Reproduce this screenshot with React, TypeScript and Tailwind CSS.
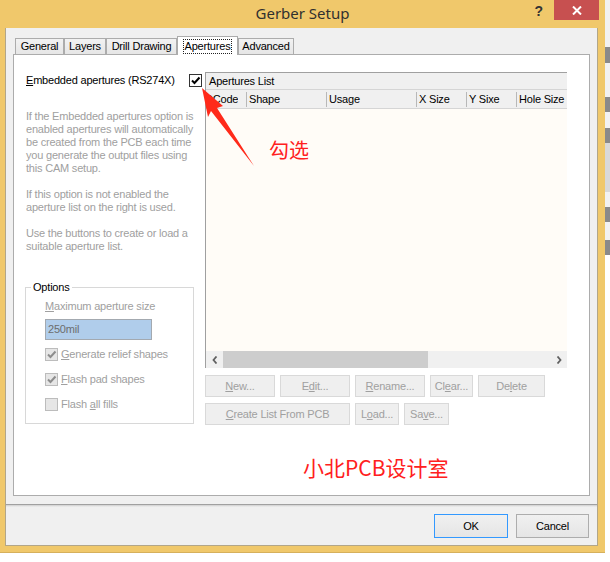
import React from 'react';

const desc = [
  ['If the Embedded apertures option is', 'enabled apertures will automatically', 'be created from the PCB each time', 'you generate the output files using', 'this CAM setup.'],
  ['If this option is not enabled the', 'aperture list on the right is used.'],
  ['Use the buttons to create or load a', 'suitable aperture list.'],
];

const tabs = [
  { label: 'General', w: 'w-[49px]' },
  { label: 'Layers', w: 'w-[42px]' },
  { label: 'Drill Drawing', w: 'w-[71px]' },
  { label: 'Apertures', w: 'w-[61px]', active: true },
  { label: 'Advanced', w: 'w-[56px]' },
];

const CheckMark = ({ color }: { color: string }) => (
  <svg width="11" height="11" viewBox="0 0 11 11">
    <path d="M2 5.5 L4.5 8 L9.5 2.5" fill="none" stroke={color} strokeWidth="2" />
  </svg>
);

const CheckBox = ({ checked, disabled }: { checked?: boolean; disabled?: boolean }) => (
  <div
    className={`w-[13px] h-[13px] shrink-0 flex items-center justify-center border ${
      disabled ? 'border-[#bcbcbc] bg-[#e6e6e6]' : 'border-[#333333] bg-white'
    }`}
  >
    {checked && <CheckMark color={disabled ? '#8d8d8d' : '#000000'} />}
  </div>
);

const OptionRow = ({ checked, children }: { checked?: boolean; children: React.ReactNode }) => (
  <div className="h-[13px] flex items-center">
    <CheckBox checked={checked} disabled />
    <span className="ml-[3px] text-[#a0a0a0]">{children}</span>
  </div>
);

const DisabledButton = ({ w, children }: { w: string; children: React.ReactNode }) => (
  <div className={`${w} h-[22px] border border-[#d9d9d9] bg-[#efefef] text-[#a0a0a0] flex items-center justify-center`}>
    {children}
  </div>
);

const Chevron = ({ dir }: { dir: 'left' | 'right' }) => (
  <svg width="6" height="8" viewBox="0 0 6 8">
    <path
      d={dir === 'left' ? 'M4.5 0.5 L1.5 4 L4.5 7.5' : 'M1.5 0.5 L4.5 4 L1.5 7.5'}
      fill="none"
      stroke="#606060"
      strokeWidth="1.8"
    />
  </svg>
);

const columns = [
  { label: 'Shape', w: 'w-[80px]' },
  { label: 'Usage', w: 'w-[90px]' },
  { label: 'X Size', w: 'w-[50px]' },
  { label: 'Y Sixe', w: 'w-[50px]' },
];

export default function App() {
  return (
    <div className="relative flex w-[610px] h-[562px] bg-white overflow-hidden font-['Liberation_Sans',Arial,sans-serif] text-[11px] tracking-[-0.2px] text-black">
      {/* window */}
      <div className="flex flex-col w-[605px] h-[553px] bg-[#f0c86b] border-b border-[#d6b05c]">
        {/* title bar */}
        <div className="grid grid-cols-[1fr_auto_1fr] h-[28px] shrink-0">
          <div />
          <div className="pt-[3px] font-['Noto_Sans',sans-serif] text-[15px] leading-[20px] tracking-normal text-[#303030]">
            Gerber Setup
          </div>
          <div className="flex justify-end items-start pr-[6px]">
            <span className="mt-[3px] mr-[11px] font-bold text-[14px] leading-[16px] tracking-normal text-[#333333]">?</span>
            <div className="w-[45px] h-[20px] bg-[#c75050] flex items-center justify-center">
              <svg width="10" height="9" viewBox="0 0 10 9">
                <path d="M1 0.5 L9 8.5 M9 0.5 L1 8.5" stroke="#ffffff" strokeWidth="2" />
              </svg>
            </div>
          </div>
        </div>

        {/* client area */}
        <div className="flex-1 flex flex-col ml-[5px] mr-[7px] mb-[6px] border-x border-b border-[#b2a689] bg-[#f0f0f0]">
          <div className="pt-[10px] px-[7px]">
            <div className="flex items-end h-[16px] pl-[2px]">
              {tabs.map(t =>
                t.active ? (
                  <div
                    key={t.label}
                    className={`${t.w} relative z-10 h-[19px] -mb-[1px] border-t border-x border-[#acacac] bg-white flex items-start justify-center pt-[2px]`}
                  >
                    <span className="border border-dotted border-[#222222] px-[1px] leading-[13px]">{t.label}</span>
                  </div>
                ) : (
                  <div
                    key={t.label}
                    className={`${t.w} h-[16px] border-t border-x border-[#acacac] bg-gradient-to-b from-[#f2f2f2] to-[#e6e6e6] flex items-center justify-center`}
                  >
                    {t.label}
                  </div>
                ),
              )}
            </div>

            {/* tab panel */}
            <div className="h-[442px] border border-[#acacac] bg-white flex pt-[17px] pl-[12px]">
              {/* left column */}
              <div className="w-[179px] flex flex-col">
                <div className="mt-[1px] h-[14px] flex items-center justify-between pr-[3px]">
                  <span>
                    <u>E</u>mbedded apertures (RS274X)
                  </span>
                  <CheckBox checked />
                </div>
                <div className="mt-[23px] leading-[13px] text-[#a0a0a0] whitespace-nowrap flex flex-col gap-[13px]">
                  {desc.map((p, i) => (
                    <div key={i}>
                      {p.map(line => (
                        <div key={line}>{line}</div>
                      ))}
                    </div>
                  ))}
                </div>
                <fieldset className="mt-[27px] -ml-[1px] w-[169px] border border-[#d8d8d8] pb-[12px]">
                  <legend className="ml-[5px] px-[2px] leading-[14px]">Options</legend>
                  <div className="pl-[19px]">
                    <div className="mt-[6px] leading-[13px] text-[#a0a0a0]">
                      <u>M</u>aximum aperture size
                    </div>
                    <div className="mt-[6px] w-[107px] h-[21px] border border-[#a3a9b0] bg-[#b0cdeb] pl-[2px] flex items-center text-[#6d6d6d]">
                      250mil
                    </div>
                    <div className="mt-[8px] flex flex-col gap-[12px]">
                      <OptionRow checked>
                        <u>G</u>enerate relief shapes
                      </OptionRow>
                      <OptionRow checked>
                        <u>F</u>lash pad shapes
                      </OptionRow>
                      <OptionRow>
                        Flash <u>a</u>ll fills
                      </OptionRow>
                    </div>
                  </div>
                </fieldset>
              </div>

              {/* right column */}
              <div className="flex flex-col">
                <div className="w-[362px] h-[296px] border-l border-t border-[#a0a0a0] flex flex-col overflow-hidden">
                  <div className="h-[17px] shrink-0 bg-[#f0f0f0] border-b border-[#d5d5d5] flex items-center pl-[3px]">
                    Apertures List
                  </div>
                  <div className="h-[19px] shrink-0 bg-[#f0f0f0] border-b border-[#d5d5d5] flex items-center">
                    <div className="w-[41px] h-[15px] pl-[3px] border-r border-[#b8b8b8] flex items-center">
                      <div className="overflow-hidden">
                        <span className="block -ml-[4px]">DCode</span>
                      </div>
                    </div>
                    {columns.map(c => (
                      <div key={c.label} className={`${c.w} h-[15px] pl-[2px] border-r border-[#b8b8b8] flex items-center whitespace-nowrap`}>
                        {c.label}
                      </div>
                    ))}
                    <div className="flex-1 pl-[2px] whitespace-nowrap overflow-hidden">Hole Size</div>
                  </div>
                  <div className="flex-1 bg-[#fffcf7]" />
                  <div className="h-[17px] shrink-0 bg-[#f0f0f0] flex">
                    <div className="w-[17px] flex items-center justify-center">
                      <Chevron dir="left" />
                    </div>
                    <div className="w-[205px] bg-[#cdcdcd]" />
                    <div className="flex-1" />
                    <div className="w-[17px] flex items-center justify-center">
                      <Chevron dir="right" />
                    </div>
                  </div>
                </div>

                <div className="mt-[7px] flex gap-[5px]">
                  <DisabledButton w="w-[70px]">
                    <span><u>N</u>ew...</span>
                  </DisabledButton>
                  <DisabledButton w="w-[70px]">
                    <span>E<u>d</u>it...</span>
                  </DisabledButton>
                  <DisabledButton w="w-[70px]">
                    <span><u>R</u>ename...</span>
                  </DisabledButton>
                  <DisabledButton w="w-[43px]">
                    <span>Cl<u>e</u>ar...</span>
                  </DisabledButton>
                  <DisabledButton w="w-[67px]">
                    <span>De<u>l</u>ete</span>
                  </DisabledButton>
                </div>
                <div className="mt-[6px] flex gap-[5px]">
                  <DisabledButton w="w-[145px]">
                    <span><u>C</u>reate List From PCB</span>
                  </DisabledButton>
                  <DisabledButton w="w-[44px]">
                    <span>L<u>o</u>ad...</span>
                  </DisabledButton>
                  <DisabledButton w="w-[45px]">
                    <span>Sa<u>v</u>e...</span>
                  </DisabledButton>
                </div>
              </div>
            </div>
          </div>

          <div className="mt-[8px] h-[3px] border-t border-[#a0a0a0] bg-gradient-to-b from-[#cfcfcf] to-[#f0f0f0]" />

          <div className="mt-[7px] flex justify-end gap-[8px] pr-[8px]">
            <div className="w-[74px] h-[24px] border border-[#3399ff] bg-gradient-to-b from-[#f0f0f0] to-[#e5e5e5] flex items-center justify-center">
              OK
            </div>
            <div className="w-[73px] h-[24px] border border-[#adadad] bg-gradient-to-b from-[#f0f0f0] to-[#e5e5e5] flex items-center justify-center">
              Cancel
            </div>
          </div>
        </div>
      </div>

      {/* background window edge at the right */}
      <div className="w-[5px] flex flex-col bg-[#f2f2f2]">
        <div className="h-[47px]" />
        <div className="h-[16px] bg-[#8a8a8a]" />
        <div className="h-[34px]" />
        <div className="h-[15px] bg-[#8a8a8a]" />
        <div className="h-[16px]" />
        <div className="h-[15px] bg-[#8a8a8a]" />
        <div className="h-[49px] bg-[#d9d9d9]" />
        <div className="h-[15px]" />
        <div className="h-[15px] bg-[#8a8a8a]" />
        <div className="h-[18px]" />
        <div className="h-[15px] bg-[#8a8a8a]" />
        <div className="flex-1 bg-white" />
      </div>

      {/* red annotations */}
      <svg className="absolute left-[195px] top-[80px] pointer-events-none" width="70" height="95" viewBox="195 80 70 95">
        <path d="M202 88 L223 106 L217 108 L254 166 L211 111 L208 117 Z" fill="#ff2a1a" />
      </svg>
      <div className="absolute left-[269px] top-[138px] text-[20px] leading-[24px] tracking-normal text-[#ff2020] font-['Noto_Sans_CJK_SC',sans-serif]">
        勾选
      </div>
      <div className="absolute left-[303px] top-[453px] text-[21px] leading-[28px] tracking-normal text-[#ff2020] font-['Noto_Sans_CJK_SC',sans-serif]">
        小北PCB设计室
      </div>
    </div>
  );
}
